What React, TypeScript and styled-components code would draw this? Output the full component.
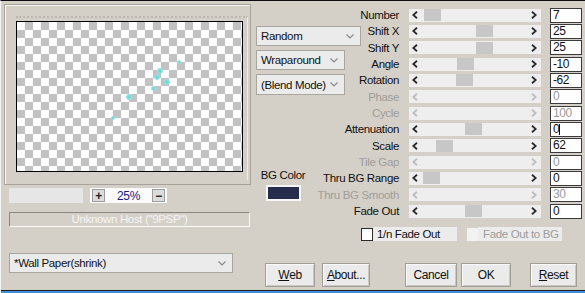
import React from 'react'
import styled, { createGlobalStyle } from 'styled-components'

const FONT = `"Liberation Sans", Arial, sans-serif`

const GlobalStyle = createGlobalStyle`
  html, body {
    margin: 0;
    padding: 0;
    background: #d4d0c8;
    overflow: hidden;
  }
`

type Param = {
  label: string
  value: string
  thumb?: number
  disabled?: boolean
  caret?: boolean
}

const PARAMS: Param[] = [
  { label: 'Number', value: '7', thumb: 6 },
  { label: 'Shift X', value: '25', thumb: 58 },
  { label: 'Shift Y', value: '25', thumb: 58 },
  { label: 'Angle', value: '-10', thumb: 39 },
  { label: 'Rotation', value: '-62', thumb: 38 },
  { label: 'Phase', value: '0', disabled: true },
  { label: 'Cycle', value: '100', disabled: true },
  { label: 'Attenuation', value: '0', thumb: 47, caret: true },
  { label: 'Scale', value: '62', thumb: 18 },
  { label: 'Tile Gap', value: '0', disabled: true },
  { label: 'Thru BG Range', value: '0', thumb: 5 },
  { label: 'Thru BG Smooth', value: '30', disabled: true },
  { label: 'Fade Out', value: '0', thumb: 47 },
]

const DOTS = [
  { x: 162, y: 40, r: 2 },
  { x: 143, y: 49, r: 3 },
  { x: 140, y: 55, r: 3 },
  { x: 150, y: 60, r: 3 },
  { x: 136, y: 66, r: 2.5 },
  { x: 112, y: 75, r: 3 },
  { x: 96, y: 96, r: 2 },
]

const Chevron = () => (
  <svg width="8" height="5" viewBox="0 0 8 5">
    <polyline points="0.5,0.5 4,4 7.5,0.5" fill="none" stroke="#8a8a8a" strokeWidth="1.2" />
  </svg>
)

const Arrow: React.FC<{ dir: 'left' | 'right'; disabled?: boolean }> = ({ dir, disabled }) => (
  <svg width="6" height="8" viewBox="0 0 6 8">
    <polyline
      points={dir === 'left' ? '5,0.8 1.3,4 5,7.2' : '1,0.8 4.7,4 1,7.2'}
      fill="none"
      stroke={disabled ? '#bdbdbd' : '#2a2a2a'}
      strokeWidth="1.8"
    />
  </svg>
)

const Select: React.FC<{ width: number; height?: number; children: React.ReactNode }> = ({
  width,
  height = 20,
  children,
}) => (
  <SelectBox $w={width} $h={height}>
    <span>{children}</span>
    <Chevron />
  </SelectBox>
)

export default function App() {
  return (
    <>
      <GlobalStyle />
      <Dialog>
        <Body>
          <LeftColumn>
            <GroupBox>
              <PreviewFrame>
                <Preview>
                  {DOTS.map((d, i) => (
                    <Dot key={i} style={{ left: d.x - d.r, top: d.y - d.r, width: d.r * 2, height: d.r * 2 }} />
                  ))}
                </Preview>
              </PreviewFrame>
            </GroupBox>

            <ZoomRow>
              <ZoomField />
              <ZoomControl>
                <ZoomBtn>+</ZoomBtn>
                <Percent>25%</Percent>
                <ZoomBtn>−</ZoomBtn>
              </ZoomControl>
            </ZoomRow>

            <HostField>Unknown Host ("9PSP")</HostField>

            <WallRow>
              <Select width={224}>*Wall Paper(shrink)</Select>
            </WallRow>
          </LeftColumn>

          <RightColumn>
            <TopRow>
              <Middle>
                <DropStack>
                  <Select width={105}>Random</Select>
                  <Select width={89}>Wraparound</Select>
                  <Select width={89} height={21}>(Blend Mode)</Select>
                </DropStack>
                <BgColor>
                  <span>BG Color</span>
                  <Swatch />
                </BgColor>
              </Middle>

              <Params>
                {PARAMS.map((p) => (
                  <React.Fragment key={p.label}>
                    <Label $disabled={p.disabled}>{p.label}</Label>
                    <Track>
                      <Arrow dir="left" disabled={p.disabled} />
                      <Lane>{p.thumb !== undefined && <Thumb $pos={p.thumb} />}</Lane>
                      <Arrow dir="right" disabled={p.disabled} />
                    </Track>
                    <ValueBox $disabled={p.disabled}>
                      {p.value}
                      {p.caret && <Caret />}
                    </ValueBox>
                  </React.Fragment>
                ))}
              </Params>
            </TopRow>

            <CheckRow>
              <CheckBox />
              <CheckLabel>1/n Fade Out</CheckLabel>
              <CheckBox $disabled />
              <CheckLabel $disabled>Fade Out to BG</CheckLabel>
            </CheckRow>

            <ButtonRow>
              <Button $w={50} $gap={0}>
                <u>W</u>eb
              </Button>
              <Button $w={48} $gap={7}>
                <u>A</u>bout...
              </Button>
              <Button $w={52} $gap={35}>
                Cancel
              </Button>
              <Button $w={50} $gap={4}>
                OK
              </Button>
              <Button $w={47} $gap={19}>
                <u>R</u>eset
              </Button>
            </ButtonRow>
          </RightColumn>
        </Body>
        <Footer />
      </Dialog>
    </>
  )
}

const Dialog = styled.div`
  width: 585px;
  height: 293px;
  box-sizing: border-box;
  border-top: 1px solid #0c0c0c;
  border-left: 1px solid #f4f4f4;
  display: flex;
  flex-direction: column;
  background: #d4d0c8;
  font-family: ${FONT};
  font-size: 11.5px;
  letter-spacing: -0.35px;
  color: #111;
`

const Body = styled.div`
  flex: 1;
  display: flex;
  min-height: 0;
`

const Footer = styled.div`
  height: 2px;
  border-top: 1px solid #1c1c1c;
  background: #3f8fde;
`

const LeftColumn = styled.div`
  width: 251px;
  display: flex;
  flex-direction: column;
  padding-top: 3px;
`

const GroupBox = styled.div`
  margin-left: 3px;
  width: 247px;
  height: 181px;
  box-sizing: border-box;
  border: 1px solid #a7a39b;
  box-shadow: inset 1px 1px 0 #f6f6f6;
  padding: 11px 0 0 11px;
`

const PreviewFrame = styled.div`
  width: 232px;
  height: 164px;
  box-sizing: border-box;
  border-top: 2px dotted #bcb8ae;
  border-right: 1px solid #ecebe8;
  padding-top: 3px;
`

const Preview = styled.div`
  position: relative;
  width: 227px;
  height: 151px;
  box-sizing: border-box;
  border: 1px solid #000;
  background-color: #fff;
  background-image: conic-gradient(#c2c2c2 0 25%, #fff 0 50%, #c2c2c2 0 75%, #fff 0);
  background-size: 16px 16px;
  overflow: hidden;
`

const Dot = styled.span`
  position: absolute;
  border-radius: 50%;
  background: radial-gradient(circle, #5fd3d6 0%, #8fe2e4 55%, rgba(160, 230, 232, 0.4) 100%);
`

const ZoomRow = styled.div`
  display: flex;
  align-items: center;
  margin: 3px 0 0 8px;
  height: 15px;
`

const ZoomField = styled.div`
  width: 74px;
  height: 15px;
  background: #e6e6e6;
`

const ZoomControl = styled.div`
  margin-left: 7px;
  width: 77px;
  height: 15px;
  background: #fbfbfb;
  display: flex;
  align-items: center;
  padding: 0 2px;
  box-sizing: border-box;
`

const ZoomBtn = styled.div`
  width: 13px;
  height: 13px;
  box-sizing: border-box;
  border: 1px solid #9c9c9c;
  background: #dcdcdc;
  display: flex;
  align-items: center;
  justify-content: center;
  font-size: 12px;
  font-weight: bold;
  line-height: 1;
  color: #222;
`

const Percent = styled.div`
  flex: 1;
  text-align: center;
  color: #1a1a80;
  font-size: 12px;
`

const HostField = styled.div`
  margin: 9px 0 0 8px;
  width: 241px;
  height: 15px;
  box-sizing: border-box;
  border: 1px solid;
  border-color: #8a8780 #fdfdfd #fdfdfd #8a8780;
  color: #f4f4f4;
  line-height: 13px;
  text-align: center;
`

const WallRow = styled.div`
  margin: 26px 0 0 8px;
`

const SelectBox = styled.div<{ $w: number; $h: number }>`
  width: ${(p) => p.$w}px;
  height: ${(p) => p.$h}px;
  box-sizing: border-box;
  border: 1px solid #a9a69f;
  background: #ebebeb;
  display: flex;
  align-items: center;
  justify-content: space-between;
  padding: 0 6px 0 4px;
  white-space: nowrap;
  flex-shrink: 0;
`

const RightColumn = styled.div`
  flex: 1;
  display: flex;
  flex-direction: column;
  padding-top: 6px;
`

const TopRow = styled.div`
  display: flex;
`

const Middle = styled.div`
  width: 54px;
  margin-left: 4px;
  display: flex;
  flex-direction: column;
`

const DropStack = styled.div`
  margin-top: 19px;
  display: flex;
  flex-direction: column;
  gap: 4px;
  position: relative;
  z-index: 1;
`

const BgColor = styled.div`
  margin-top: 74px;
  display: flex;
  flex-direction: column;
  align-items: center;
  gap: 3px;
  line-height: 13px;
  white-space: nowrap;
`

const Swatch = styled.div`
  width: 35px;
  height: 16px;
  box-sizing: border-box;
  border: 2px solid #f6f6f6;
  background: #262c4c;
`

const Params = styled.div`
  display: grid;
  grid-template-columns: 90px 132px 32px;
  grid-auto-rows: 16.33px;
  column-gap: 9px;
  align-items: center;
`

const Label = styled.div<{ $disabled?: boolean }>`
  text-align: right;
  padding-right: 1px;
  white-space: nowrap;
  color: ${(p) => (p.$disabled ? '#a09d98' : '#111')};
  line-height: 14px;
`

const Track = styled.div`
  height: 13px;
  background: #eeeeee;
  display: flex;
  align-items: center;
  padding: 0 4px 0 3px;
`

const Lane = styled.div`
  flex: 1;
  height: 12px;
  display: flex;
  align-items: center;
`

const Thumb = styled.div<{ $pos: number }>`
  margin-left: ${(p) => p.$pos}px;
  width: 17px;
  height: 12px;
  background: #c7c7c7;
`

const ValueBox = styled.div<{ $disabled?: boolean }>`
  height: 15px;
  box-sizing: border-box;
  border: 1px solid #3a3a3a;
  background: #fff;
  padding-left: 2px;
  font-size: 12px;
  letter-spacing: -0.4px;
  line-height: 13px;
  color: ${(p) => (p.$disabled ? '#9a9a9a' : '#111')};
  display: flex;
  align-items: center;
`

const Caret = styled.span`
  display: inline-block;
  width: 1px;
  height: 11px;
  background: #000;
`

const CheckRow = styled.div`
  margin: 8px 0 0 109px;
  display: flex;
  align-items: center;
  height: 14px;
`

const CheckBox = styled.div<{ $disabled?: boolean }>`
  width: ${(p) => (p.$disabled ? 11 : 12)}px;
  height: 13px;
  box-sizing: border-box;
  background: ${(p) => (p.$disabled ? '#f2f2f2' : '#fff')};
  border: ${(p) => (p.$disabled ? 'none' : '1px solid #2a2a2a')};
  margin-left: ${(p) => (p.$disabled ? 10 : 0)}px;
`

const CheckLabel = styled.div<{ $disabled?: boolean }>`
  width: 84px;
  height: 14px;
  background: #ececec;
  box-sizing: border-box;
  padding-left: ${(p) => (p.$disabled ? 5 : 4)}px;
  line-height: 14px;
  white-space: nowrap;
  color: ${(p) => (p.$disabled ? '#9c9c9c' : '#111')};
`

const ButtonRow = styled.div`
  margin: 22px 0 0 13px;
  display: flex;
`

const Button = styled.div<{ $w: number; $gap: number }>`
  width: ${(p) => p.$w}px;
  height: 24px;
  margin-left: ${(p) => p.$gap}px;
  box-sizing: border-box;
  border: 1px solid #a19e97;
  box-shadow: inset 1px 1px 0 #fafafa, inset -1px -1px 0 #cbc8c1;
  background: #ebebeb;
  display: flex;
  align-items: center;
  justify-content: center;
  font-size: 12px;
  letter-spacing: -0.4px;

  u {
    text-decoration: underline;
  }
`
